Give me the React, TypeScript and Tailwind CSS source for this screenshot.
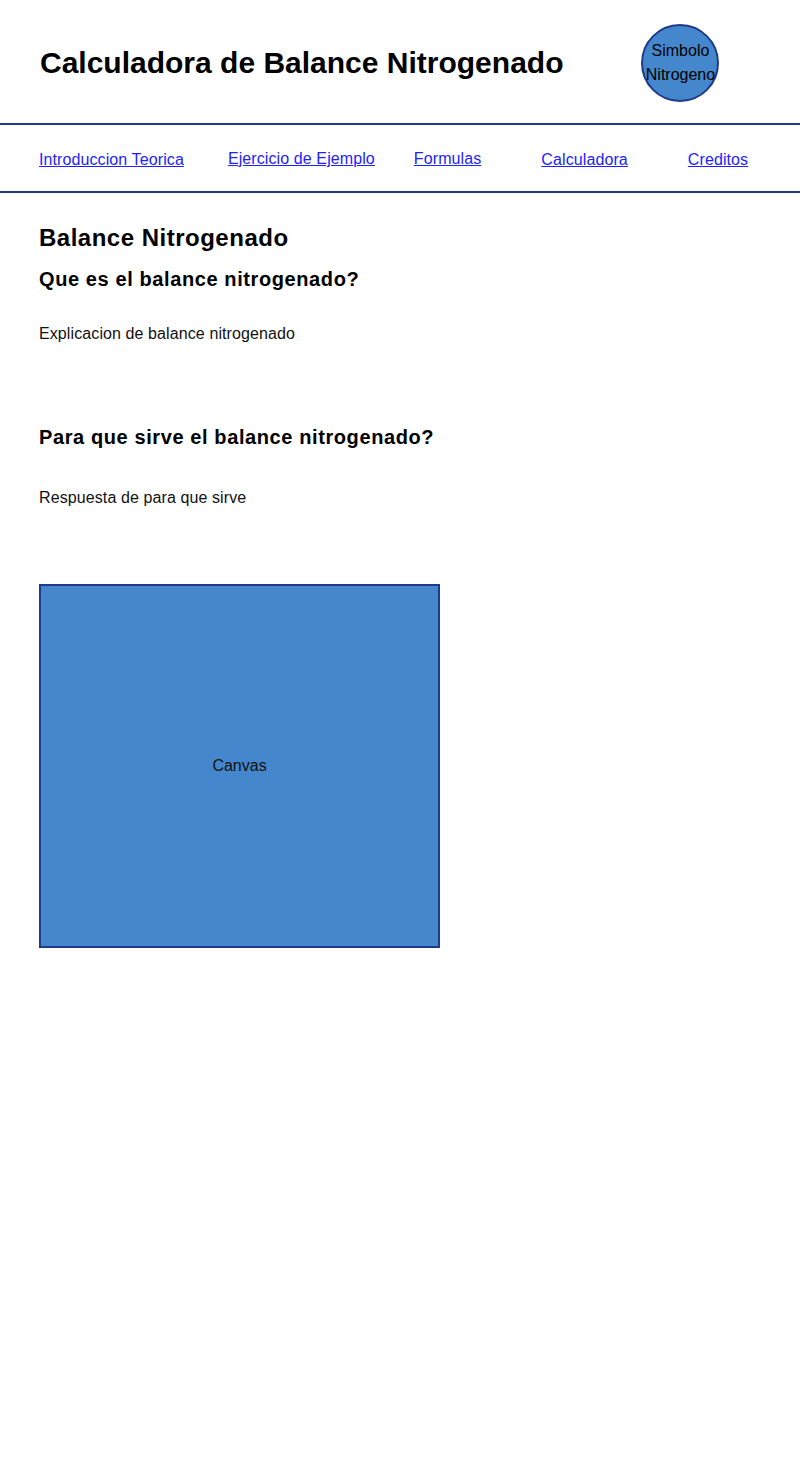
import React from 'react';

const links = [
  { label: 'Introduccion Teorica', cls: 'ml-[39px] mt-[4px]' },
  { label: 'Ejercicio de Ejemplo', cls: 'ml-[44px] mt-[2px]' },
  { label: 'Formulas', cls: 'ml-[39px] mt-[2px]' },
  { label: 'Calculadora', cls: 'ml-[60px] mt-[4px]' },
  { label: 'Creditos', cls: 'ml-[60px] mt-[4px]' },
];

export default function App() {
  return (
    <div className="min-h-[1468px] bg-white text-black font-['Liberation_Sans',Arial,sans-serif]">
      <header className="flex h-[123px] items-center">
        <h1 className="ml-[40px] mt-[2px] text-[30px] font-bold">Calculadora de Balance Nitrogenado</h1>
        <div className="ml-[78px] mt-[2px] flex h-[78px] w-[78px] flex-col items-center justify-center rounded-full border-2 border-[#1f3a8a] bg-[#4487cc] text-[16px] leading-[24px]">
          <span>Simbolo</span>
          <span>Nitrogeno</span>
        </div>
      </header>

      <nav className="flex h-[70px] items-center border-y-2 border-[#1f3a8a]">
        {links.map(l => (
          <a key={l.label} href="#" className={`${l.cls} text-[16px] tracking-[0.1px] text-[#2222ff] underline`}>
            {l.label}
          </a>
        ))}
      </nav>

      <main className="px-[39px]">
        <h2 className="mt-[29px] text-[24px] font-bold leading-[32px] tracking-[0.5px]">Balance Nitrogenado</h2>
        <h3 className="mt-[12px] text-[20px] font-bold leading-[26px] tracking-[0.6px]">Que es el balance nitrogenado?</h3>
        <p className="mt-[30px] text-[16px] leading-[24px] tracking-[0.1px] text-[#111]">Explicacion de balance nitrogenado</p>
        <h3 className="mt-[78px] text-[20px] font-bold leading-[26px] tracking-[0.6px]">Para que sirve el balance nitrogenado?</h3>
        <p className="mt-[36px] text-[16px] leading-[24px] tracking-[0.1px] text-[#111]">Respuesta de para que sirve</p>

        <div className="mt-[74px] flex h-[364px] w-[401px] items-center justify-center border-2 border-[#1f3a8a] bg-[#4487cc] text-[16px] text-[#111]">
          Canvas
        </div>
      </main>
    </div>
  );
}
